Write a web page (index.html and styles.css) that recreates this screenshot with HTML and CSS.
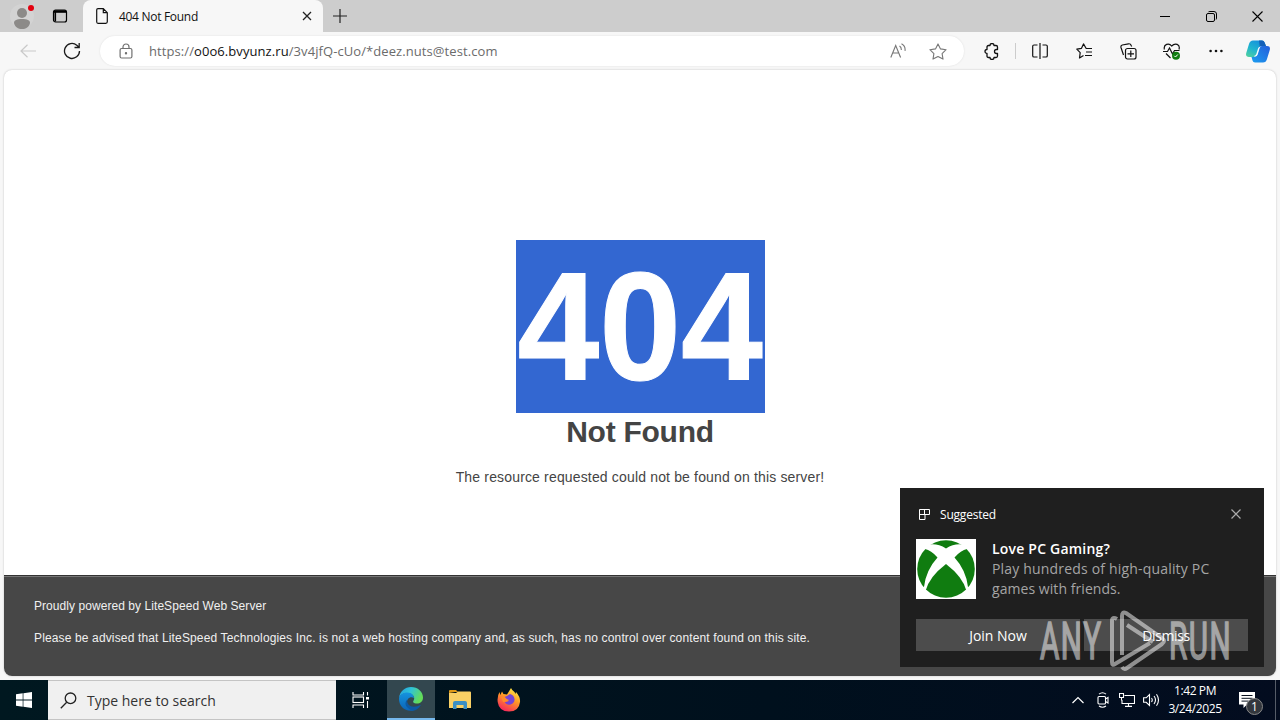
FILE: index.html
```html
<!DOCTYPE html>
<html lang="en">
  <head>
    <meta charset="UTF-8" />
    <meta name="viewport" content="width=device-width, initial-scale=1.0" />
    <title>404 Not Found</title>
    <link rel="stylesheet" href="styles.css">
  </head>
  <body>
    <!-- tabs -->
    <header class="titlebar">
      <div class="titlebar-left">
        <svg class="icon" width="24" height="26" viewBox="0 0 24 26">
          <circle cx="12" cy="13" r="12" fill="#d3d3d3" />
          <circle cx="12" cy="10" r="5" fill="#8c8a88" />
          <path d="M4 20c0-3 3-4 8-4s8 1 8 4c-1 4-4 6-8 6s-7-2-8-6z" fill="#8c8a88" />
          <circle cx="21" cy="5" r="3" fill="#e3000f" />
        </svg>
        <svg class="icon" width="16" height="16" viewBox="0 0 16 16" fill="none" stroke="#000" stroke-width="1.2">
          <rect x="1.5" y="2" width="13" height="12" rx="2" />
          <path d="M2 3.500h12" stroke-width="2.600" /><path d="M3.300 3v10.500" stroke-width="1.600" />
        </svg>
      </div>
      <div class="tab">
        <svg class="icon" width="12" height="16" viewBox="0 0 12 16" fill="none" stroke="#111" stroke-width="1.2">
          <path d="M2 .7h5.3l4 4v9.1q0 1.5-1.5 1.5H2Q.7 15.300.7 13.800V2Q.7.7 2 .7zM7.300.7v4h4" />
        </svg>
        <span class="tab-title">404 Not Found</span>
        <svg class="icon" width="10" height="10" viewBox="0 0 10 10" stroke="#222" stroke-width="1.3"><path d="M1 1l8 8M9 1l-8 8" /></svg>
      </div>
      <svg class="icon new-tab" width="14" height="14" viewBox="0 0 14 14" stroke="#222" stroke-width="1.2"><path d="M7 0v14M0 7h14" /></svg>
      <div class="window-buttons">
        <span><svg width="10" height="10" viewBox="0 0 10 10" stroke="#000"><path d="M0 5.500h10" /></svg></span>
        <span><svg width="11" height="11" viewBox="0 0 11 11" fill="none" stroke="#000"><rect x=".5" y="2.500" width="8" height="8" rx="1.500" /><path d="M2.500 .8Q3 .5 4 .5h4q2.500 0 2.500 2.500v4q0 1-.4 1.500" /></svg></span>
        <span><svg width="11" height="11" viewBox="0 0 11 11" stroke="#000" stroke-width="1.1"><path d="M.5.5l10 10M10.500.5l-10 10" /></svg></span>
      </div>
    </header>

    <!-- address bar -->
    <nav class="toolbar">
      <span class="tool"><svg width="16" height="14" viewBox="0 0 16 14" fill="none" stroke="#c9c9c9" stroke-width="1.2"><path d="M16 7H1M7.500.7L1 7l6.500 6.300" /></svg></span>
      <span class="tool"><svg width="18" height="18" viewBox="0 0 18 18" fill="none" stroke="#1a1a1a" stroke-width="1.3"><path d="M16.500 9a7.500 7.500 0 1 1-2.700-5.800L15.800 5M16.200 1v4.500h-4.700" /></svg></span>
      <div class="address">
        <svg width="14" height="16" viewBox="0 0 14 16" fill="none" stroke="#707070" stroke-width="1.2"><rect x="1.100" y="5.500" width="11.800" height="9.500" rx="1.500" /><path d="M4 5.500V4a3 3 0 0 1 6 0v1.500" /><circle cx="7" cy="10.200" r=".6" fill="#707070" /></svg>
        <span class="url"><span class="url-scheme">https://</span><span class="url-host">o0o6.bvyunz.ru</span><span class="url-path">/3v4jfQ-cUo/*deez.nuts@test.com</span></span>
        <svg class="read-aloud" width="16" height="16" viewBox="0 0 16 16" fill="none" stroke="#777" stroke-width="1.100"><path d="M.8 14.500L5.700 2.500l4.900 12M2.600 10h6.200M9.500 3q2 1.200 1.800 4M11.500.8q4.200 2.200 3.500 7" /></svg>
        <svg width="18" height="17" viewBox="0 0 18 17" fill="none" stroke="#777" stroke-width="1.100" stroke-linejoin="round"><path d="M9 .9l2.500 5 5.600.8-4 3.900.9 5.500-5-2.600-5 2.600.9-5.500-4-3.900 5.600-.8z" /></svg>
      </div>
      <span class="tool"><svg width="16" height="17" viewBox="0 0 16 17" fill="none" stroke="#111" stroke-width="1.300" stroke-linejoin="round"><path d="M5.500 2.500H7a2 2 0 0 1 4 0h2q1.500 0 1.500 1.500v2.500h-1a2 2 0 0 0 0 4h1V13q0 1.500-1.500 1.500h-2a2 2 0 0 1-4 0H5.500Q4 14.500 4 13v-2.500a2 2 0 0 1 0-4V4q0-1.500 1.500-1.500z" /></svg></span>
      <i class="divider"></i>
      <span class="tool"><svg width="16" height="16" viewBox="0 0 16 16" fill="none" stroke="#111" stroke-width="1.200"><path d="M5.500 2H2Q.7 2 .7 3.300v9.400Q.7 14 2 14h3.500M8 0v16M10.500 2H14q1.300 0 1.300 1.300v9.400q0 1.300-1.300 1.300h-3.500" /></svg></span>
      <span class="tool"><svg width="17" height="16" viewBox="0 0 17 16" fill="none" stroke="#111" stroke-width="1.200" stroke-linejoin="round"><path d="M14.500 5.500h-4.300L7.500.9l-2 4.400-4.700.8 3.400 3.500L3.500 15l4-2.500M10.500 5.500H16M10 9h6M9 12.500h7" /></svg></span>
      <span class="tool"><svg width="17" height="17" viewBox="0 0 17 17" fill="none" stroke="#111" stroke-width="1.200"><rect x="5.500" y="5.500" width="10.500" height="10.500" rx="2" /><path d="M10.800 7.500v6.500M7.500 10.800h6.500M3.500 12L1 4.500Q.5 2.500 2.300 2L8.500 .8Q10.500 .5 11.200 2.500l.5 1" /></svg></span>
      <span class="tool"><svg width="18" height="17" viewBox="0 0 18 17" fill="none" stroke="#111" stroke-width="1.200"><path d="M1.400 6.500C.2 1 6-.5 8.700 3 12-.5 17.500 1 16 6.500M0 8.500h4.500L6.500 5l3 6 2-3.500h5M3 10.500l4.500 4.500" /><circle cx="13" cy="12.700" r="4" fill="#107c10" stroke="none" /><path d="M11.300 12.800l1.200 1.200 2.300-2.500" stroke="#fff" stroke-width="1" /></svg></span>
      <span class="tool"><svg width="14" height="4" viewBox="0 0 14 4" fill="#111"><circle cx="1.600" cy="2" r="1.300" /><circle cx="7" cy="2" r="1.300" /><circle cx="12.400" cy="2" r="1.300" /></svg></span>
      <span class="copilot">
        <svg width="24" height="23" viewBox="0 0 24 23">
          <defs>
            <linearGradient id="cp1" x1="0" y1="1" x2=".6" y2="0"><stop offset="0" stop-color="#55d39b" /><stop offset=".5" stop-color="#20b5cf" /><stop offset="1" stop-color="#1592dc" /></linearGradient>
            <linearGradient id="cp2" x1="0" y1="1" x2="1" y2="0"><stop offset="0" stop-color="#1b9ef0" /><stop offset="1" stop-color="#245edb" /></linearGradient>
          </defs>
          <path d="M7 .5h9q2 0 2.600 2L20 6h-4q-2 0-2.700 2L11 15q-.7 2-3 2H3q-4 0-2.600-4.500L3 4Q4 .5 7 .5z" fill="url(#cp1)" />
          <path d="M13 .5h3q2 0 2.600 2L20 6h-4q-1.500 0-2.200 1z" fill="#1460b8" />
          <path d="M17 22.500H9q-2 0-2.500-2L5.500 17H8q2.300 0 3-2l2.300-7Q14 6 16 6h5q4 0 2.600 4.500l-2.600 8.500q-1 3.500-4 3.500z" fill="url(#cp2)" />
          <path d="M12.200 8Q13 6.500 15 6.500q-1 .5-1.500 2l-1.800 6Q11 16.500 9 16.500q-1 0-1-.5 1.800-.3 2.300-2z" fill="#f3fbff" />
        </svg>
      </span>
    </nav>

    <main class="page">
      <div class="error">
        <h1><span>404</span></h1>
        <h2>Not Found</h2>
        <p>The resource requested could not be found on this server!</p>
      </div>
      <footer class="page-footer">
        <p class="powered">Proudly powered by LiteSpeed Web Server</p>
        <p class="advice">Please be advised that LiteSpeed Technologies Inc. is not a web hosting company and, as such, has no control over content found on this site.</p>
      </footer>
    </main>

    <footer class="taskbar">
      <span class="start"><svg width="16" height="16" viewBox="0 0 16 16" fill="#fff"><path d="M0 2.200l6.700-.9v6.300H0zM7.400 1.200L16 0v7.600H7.400zM0 8.400h6.700v6.300L0 13.800zM7.400 8.400H16V16l-8.600-1.200z" /></svg></span>
      <div class="search">
        <svg width="17" height="17" viewBox="0 0 17 17" fill="none" stroke="#222" stroke-width="1.300"><circle cx="10.500" cy="6.300" r="5.300" /><path d="M6.700 10.300L.8 16.300" /></svg>
        <span>Type here to search</span>
      </div>
      <span class="app"><svg width="17" height="16" viewBox="0 0 17 16" fill="none" stroke="#fff" stroke-width="1.100"><path d="M1 0v3h10.500V0M1 16v-3h10.500v3M15.500 0v3.500M15.500 9v7" /><rect x="1" y="5" width="10.500" height="5.500" /><path d="M14 5h3v2.500h-3z" fill="#fff" stroke="none" /></svg></span>
      <span class="app active">
        <svg width="24" height="24" viewBox="0 0 24 24">
          <defs>
            <linearGradient id="e1" x1="0" y1="0" x2="1" y2=".4"><stop offset="0" stop-color="#229be0" /><stop offset=".5" stop-color="#30c3d6" /><stop offset="1" stop-color="#63dc59" /></linearGradient>
            <linearGradient id="e2" x1="0" y1="0" x2="0" y2="1"><stop offset="0" stop-color="#1593df" /><stop offset="1" stop-color="#0b63b5" /></linearGradient>
          </defs>
          <path d="M0 11C1 4 6 0 12 0c7 0 12 5 12 10.500 0 4-3 6-6 6-3.500 0-4.500-1.500-3.500-2.700C17 10 13 6 8.500 6 4.500 6 1 8 0 11z" fill="url(#e1)" />
          <path d="M0 12c0-4 4-6.500 8.500-6.500 4 0 6.500 3 6.500 5.500-4-2-7 1-7 4 0 4 3 7 7 8.500C6 25.500 0 19 0 12z" fill="url(#e2)" />
          <path d="M8.200 12.500C7.300 19 14 22 22 17.800 20 21.500 17 23.500 14 23.700 8 22 4 17 8.200 12.500z" fill="#0c59a4" />
        </svg>
      </span>
      <span class="app">
        <svg width="22" height="20" viewBox="0 0 22 20">
          <path d="M0 1Q0 0 1 0h6l2 2h-3L0 3z" fill="#e19a16" />
          <path d="M0 3h7l2-1.500h12q1 0 1 1V18H0z" fill="#f9d065" />
          <path d="M4 19v-6q0-2 2-2h10q2 0 2 2v6h-3.500v-4h-7v4z" fill="#3a8fc4" />
        </svg>
      </span>
      <span class="app">
        <svg width="24" height="24" viewBox="0 0 24 24">
          <defs><linearGradient id="fx" x1=".8" y1="0" x2=".3" y2="1"><stop offset="0" stop-color="#fff04a" /><stop offset=".45" stop-color="#ff9a25" /><stop offset="1" stop-color="#f6245d" /></linearGradient></defs>
          <path d="M2.500 4l.8 3L5 3.500 6.500 6 10 6.500 14 0q1 2.500 3.500 4l1 2 .5-2q4.500 5 4 10-1 9.500-11 9.500T.7 14Q0 8 2.500 4z" fill="url(#fx)" />
          <path d="M7.500 9L10 8l3-2q4 1 4.500 5t-4 5.500q-4 1-6-3 3 .8 4.500-.8l-2.500-1.500q-1.500-.7-2-2.200z" fill="#7545d5" />
          <path d="M4 9l3.500-.3 2.500 2.500 1.800.5-2.800 2-3 .3z" fill="#ff8b2b" />
        </svg>
      </span>
      <div class="tray">
        <svg width="12" height="8" viewBox="0 0 12 8" fill="none" stroke="#fff" stroke-width="1.200"><path d="M.5 7L6 1.500 11.500 7" /></svg>
        <svg class="camera" width="12" height="16" viewBox="0 0 12 16" fill="none" stroke="#fff" stroke-width="1.100"><rect x="1" y="4.500" width="7.500" height="7.500" rx="1" /><path d="M8.500 7l2.500-1.500v5.500L8.500 9.500M2 2.200Q5.500-.7 9 2.200M2 14q3.500 2.500 7 0" /></svg>
        <svg width="16" height="14" viewBox="0 0 16 14" fill="none" stroke="#fff" stroke-width="1.100"><path d="M5.500 2.500h10v8H3V7M9.500 10.500v3M6 13.400h7M.5.500h4v4h-4zM2.500 4.500v3" /></svg>
        <svg class="speaker" width="17" height="14" viewBox="0 0 17 14" fill="none" stroke="#fff" stroke-width="1.100"><path d="M.6 4.800h2.600L6.500 1.500v11L3.200 9.300H.6zM8.500 5q1.500 2 0 4M11 3q3 4 0 8M13.500 1.200q4 5.800 0 11.600" /></svg>
      </div>
      <div class="clock"><span class="time">1:42 PM</span><span class="date">3/24/2025</span></div>
      <div class="notifications">
        <svg width="16" height="16" viewBox="0 0 16 16"><path d="M0 0h16v12.500H8L4.500 16v-3.500H0z" fill="#fff" /><path d="M2.500 3.500h11M2.500 6.300h11M2.500 9.100h7" stroke="#08111e" stroke-width="1" /></svg>
        <span class="badge">1</span>
      </div>
      <i class="show-desktop"></i>
    </footer>

    <aside class="toast">
      <div class="toast-head">
        <svg width="12" height="12" viewBox="0 0 12 12" fill="none" stroke="#fff"><path d="M1.500 1.500h10v5h-4.500v5H1.500zM1.500 6.500H7M6.500 1.500v5" /></svg>
        <span class="toast-source">Suggested</span>
        <svg width="10" height="10" viewBox="0 0 10 10" stroke="#aaa" stroke-width="1.200"><path d="M.5.5l9 9M9.500.5l-9 9" /></svg>
      </div>
      <div class="toast-body">
        <svg width="60" height="60" viewBox="0 0 60 60">
          <defs><clipPath id="ball"><circle cx="30" cy="30" r="28.800" /></clipPath></defs>
          <rect width="60" height="60" fill="#fff" />
          <g clip-path="url(#ball)" fill="#107c10">
            <path d="M14 5.500Q22 4.500 30 9.500 38 4.500 46 5.500V0H14z" />
            <path d="M0 10h9q6 1 12.500 8.500Q10 31 8 48H0z" />
            <path d="M60 10h-9q-6 1-12.500 8.500Q50 31 52 48h8z" />
            <path d="M30 25q17 13 20.500 27v8h-41v-8Q13 38 30 25z" />
          </g>
        </svg>
        <div class="toast-text">
          <strong>Love PC Gaming?</strong>
          <span class="line-a">Play hundreds of high-quality PC</span>
          <span class="line-b">games with friends.</span>
        </div>
      </div>
      <div class="toast-actions">
        <button class="join">Join Now</button>
        <button class="dismiss">Dismiss</button>
      </div>
    </aside>

    <svg class="watermark" width="200" height="64" viewBox="0 0 200 64">
      <g class="watermark-text">
        <text transform="translate(5 50) scale(.58 1)" textLength="105">ANY</text>
        <text transform="translate(134 50) scale(.58 1)" textLength="106">RUN</text>
      </g>
      <path d="M82 10Q77 7 77 12v41q0 4 3 2l35-21M87 46V7q0-5 4-3l36 25q4 3 0 6L92 59q-3 2-5-1M92 16l26 17" />
    </svg>
  </body>
</html>
```
FILE: styles.css
```css
* {
  box-sizing: border-box;
}
body {
  margin: 0;
  width: 1280px;
  height: 720px;
  overflow: hidden;
  display: flex;
  flex-direction: column;
  position: relative;
  background: #f7f7f7;
  font-family: "Open Sans", "Noto Sans", sans-serif;
  font-size: 12px;
}
svg {
  display: block;
  flex: none;
}
span,
strong,
button {
  white-space: nowrap;
}
.titlebar {
  height: 32px;
  flex: none;
  display: flex;
  align-items: center;
  background: #cdcdcd;
}
.titlebar-left {
  width: 83px;
  height: 32px;
  padding-left: 10px;
  display: flex;
  align-items: center;
  gap: 18px;
}
.tab {
  width: 240px;
  height: 32px;
  padding: 0 11px 0 13px;
  display: flex;
  align-items: center;
  background: #f7f7f7;
  border-radius: 8px 8px 0 0;
}
.tab-title {
  flex: 1;
  padding-left: 11px;
  letter-spacing: -0.3px;
  color: #111;
}
.new-tab {
  margin-left: 10px;
}
.window-buttons {
  margin-left: auto;
  display: flex;
}
.window-buttons span {
  width: 46px;
  display: flex;
  justify-content: center;
}
.toolbar {
  height: 38px;
  flex: none;
  padding-left: 6px;
  display: flex;
  align-items: center;
}
.tool {
  width: 44px;
  display: flex;
  justify-content: center;
}
.address {
  width: 864px;
  height: 30px;
  margin: 0 5px 0 6px;
  padding: 0 17px 0 19px;
  display: flex;
  align-items: center;
  background: #fff;
  border-radius: 15px;
  box-shadow: 0 0 2px #ddd;
}
.url {
  flex: 1;
  padding-left: 16px;
  font-size: 13px;
  letter-spacing: 0.08px;
  color: #6b6b6b;
}
.url-host {
  color: #111;
}
.read-aloud {
  margin-right: 23px;
}
.divider {
  width: 1px;
  height: 16px;
  margin: 0 2px;
  background: #ccc;
}
.copilot {
  width: 40px;
  display: flex;
  justify-content: center;
}
.page {
  height: 606px;
  flex: none;
  margin: 0 4px;
  display: flex;
  flex-direction: column;
  overflow: hidden;
  background: #fff;
  border-radius: 8px;
  box-shadow: 0 0 2px #bbb;
  font-family: "Liberation Sans", Arial, sans-serif;
}
.error {
  height: 505px;
  padding-top: 170px;
  display: flex;
  flex-direction: column;
  align-items: center;
  color: #444;
}
.error h1 {
  width: 249px;
  margin: 0 0 0 1px;
  display: flex;
  justify-content: center;
  font-size: 150px;
  line-height: 173px;
  color: #fff;
  background: #3367d1;
}
/* slightly taller, narrower digits */
.error h1 span {
  transform: scale(0.98, 1.03);
  -webkit-text-stroke: 1px #fff;
}
.error h2 {
  margin: 1px 0 0;
  font-size: 30px;
  letter-spacing: -0.25px;
  line-height: 36px;
}
.error p {
  margin: 19px 0 0;
  font-size: 14px;
  letter-spacing: 0.16px;
  line-height: 16px;
}
.page-footer {
  flex: 1;
  padding: 22px 30px 0;
  border-top: 1px solid #333;
  box-shadow: inset 0 1px 0 #777;
  background: #474747;
  color: #f0f0f0;
  font-size: 12px;
}
.page-footer p {
  margin: 0 0 16px;
  line-height: 16px;
}
.powered {
  letter-spacing: 0.06px;
}
.advice {
  letter-spacing: 0.14px;
}
.taskbar {
  height: 40px;
  flex: none;
  margin-top: 4px;
  display: flex;
  align-items: center;
  background: linear-gradient(90deg, #001820, #00101d 60%, #030c1f);
  color: #fff;
}
.start {
  width: 48px;
  display: flex;
  justify-content: center;
}
.search {
  width: 288px;
  height: 40px;
  padding-left: 12px;
  display: flex;
  align-items: center;
  gap: 10px;
  background: #f0f0f0;
  border: 1px solid #c4c4c4;
  border-width: 1px 0;
  color: #333;
  font-size: 14px;
}
.app {
  width: 49px;
  height: 40px;
  display: flex;
  align-items: center;
  justify-content: center;
}
.app.active {
  width: 48px;
  margin-left: 2px;
  background: #33474f;
  border-bottom: 2px solid #76b9ed;
}
.tray {
  margin-left: auto;
  display: flex;
  align-items: center;
  gap: 10px;
}
.camera {
  margin-left: 3px;
}
.speaker {
  margin-left: -2px;
}
.clock {
  width: 70px;
  display: flex;
  flex-direction: column;
  align-items: center;
  line-height: 18px;
  letter-spacing: -0.4px;
}
.notifications {
  width: 45px;
  padding-left: 9px;
  position: relative;
}
.badge {
  position: absolute;
  left: 16px;
  top: 6px;
  width: 17px;
  height: 17px;
  border: 1px solid #888;
  border-radius: 50%;
  background: #33373d;
  font-size: 12px;
  line-height: 15px;
  text-align: center;
}
.show-desktop {
  width: 5px;
  height: 40px;
  border-left: 1px solid #555c68;
}
.toast {
  position: absolute;
  left: 900px;
  top: 488px;
  width: 364px;
  height: 179px;
  padding: 16px;
  background: #1f1f1f;
  color: #fff;
}
.toast-head {
  height: 20px;
  padding: 0 7px 0 2px;
  display: flex;
  align-items: center;
}
.toast-source {
  flex: 1;
  padding-left: 10px;
  letter-spacing: -0.2px;
}
.toast-body {
  margin-top: 15px;
  display: flex;
  gap: 16px;
}
.toast-text {
  display: flex;
  flex-direction: column;
  font-size: 14px;
  line-height: 20px;
  color: #a5a5a5;
}
.toast-text strong {
  font-weight: 600;
  letter-spacing: 0.2px;
  color: #fff;
}
.line-a {
  letter-spacing: 0.18px;
}
.line-b {
  letter-spacing: 0.06px;
}
.toast-actions {
  margin-top: 20px;
  display: grid;
  grid-template-columns: 1fr 1fr;
  gap: 4px;
}
.toast-actions button {
  height: 32px;
  padding: 0;
  border: 0;
  background: #4c4c4c;
  color: #fff;
  font: 14px "Open Sans", "Noto Sans", sans-serif;
}
.toast-actions .dismiss {
  letter-spacing: -0.4px;
}
.watermark {
  position: absolute;
  left: 1035px;
  top: 609px;
  opacity: 0.5;
  fill: none;
  stroke: #fff;
  stroke-width: 4;
}
.watermark-text {
  fill: #fff;
  stroke: #fff;
  stroke-width: 1.6px;
  font-family: Roboto, sans-serif;
  font-size: 51px;
}
```
